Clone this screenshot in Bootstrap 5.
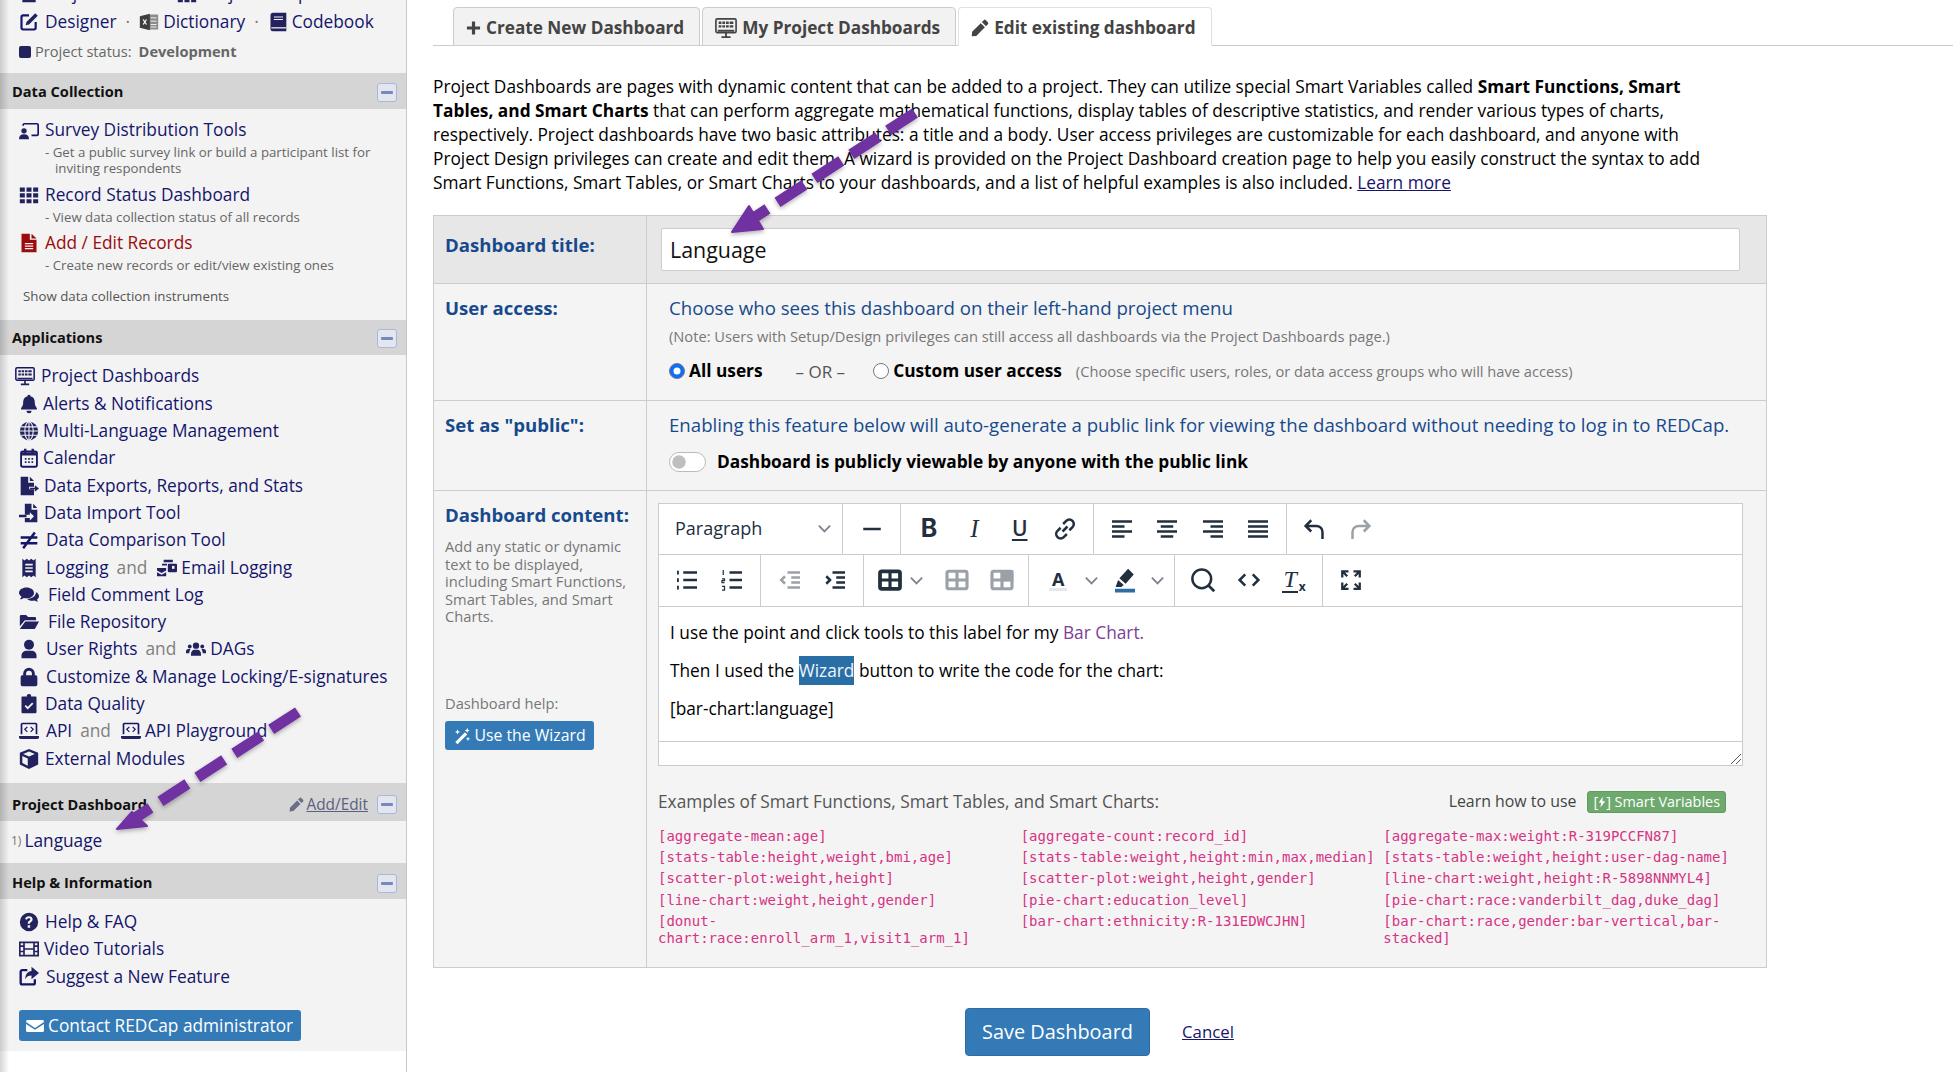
<!DOCTYPE html>
<html lang="en">
<head>
    <meta charset="UTF-8">
    <meta name="viewport" content="width=device-width, initial-scale=1.0">
    <title>Edit Project Dashboard</title>
    <link href="https://cdn.jsdelivr.net/npm/bootstrap@5.3.3/dist/css/bootstrap.min.css" rel="stylesheet">
    <style>
        html, body { height: 1072px; overflow: hidden; }
        body { font-family: "Open Sans", "Liberation Sans", sans-serif; font-size: 17.3px; color: #000; background: #fff; }
        a { text-decoration: none; }
        .page-frame { height: 1072px; position: relative; overflow: hidden; }

        /* left menu */
        .side-menu { width: 407px; flex: none; border-right: 1px solid #c8c8c8; position: relative; border-bottom-left-radius: 16px; }
        .side-menu::after { content: ""; position: absolute; top: 0; bottom: 0; left: 0; width: 9px; background: linear-gradient(to right, rgba(0,0,0,.16), rgba(0,0,0,0)); pointer-events: none; }
        .side-fill { background: #f3f3f3; height: 1051px; }
        .side-head { background: #d5d5d5; height: 36px; padding: 2px 9px 0 12px; font-weight: 700; font-size: 14.6px; color: #111; }
        .side-head.tall { height: 38px; padding-top: 5px; }
        .side-head.thin { height: 35px; }
        .side-head.low { padding-top: 4px; }
        .side-toggle { width: 20px; height: 19px; border: 1.5px solid #a9b7e0; border-radius: 3px; background: #e4e6ef; margin-left: 9px; }
        .side-toggle::before { content: ""; display: block; width: 12px; height: 2.5px; background: #7688c0; border-radius: 1px; }
        .menu-link { color: #15156b; }
        .menu-red { color: #9b0c0c; }
        .menu-row { height: 27.3px; padding-left: 15px; white-space: nowrap; }
        .menu-row.short { height: 26px; }
        .menu-and { color: #808080; margin: 0 10px 0 8px; }
        .icon-slot { flex: none; display: flex; align-items: center; padding-left: 4px; }
        .sl-26 { width: 26px; padding-left: 0; }
        .sl-28 { width: 28px; }
        .sl-29 { width: 29px; }
        .sl-30 { width: 30px; }
        .sl-31 { width: 31px; }
        .sl-33 { width: 33px; }
        .menu-ic { width: 20px; height: 20px; fill: #22225f; flex: none; }
        .menu-red-ic { fill: #9b0c0c; }
        .pencil-ic { width: 15px; height: 15px; fill: #6a6f88; margin-right: 2px; }
        .mail-ic { fill: #fff; width: 18px; height: 18px; }
        .menu-desc { font-size: 13.25px; line-height: 16px; color: #666; padding-left: 55px; text-indent: -10px; padding-right: 20px; margin-top: 1px; }
        .top-sliver { height: 8px; overflow: hidden; }
        .sliver-row { margin-top: -19.300px; }
        .status-row { font-size: 14.6px; color: #666; height: 26px; padding-left: 19px; }
        .status-dot { width: 12px; height: 12px; background: #22225f; border-radius: 2px; margin-right: 4px; }
        .status-val { font-weight: 700; margin-left: 7px; }
        .mid-dot { color: #777; margin: 0 9px; }
        .row-gap-6 { margin-top: 6px; }
        .row-gap-5 { margin-top: 5px; }
        .show-instr { font-size: 13.3px; line-height: 16px; color: #555; padding: 15px 0 15.500px 23px; }
        .add-edit { font-size: 15.4px; color: #5a6080; font-weight: 400; text-decoration: underline; }
        .row-num { font-size: 12px; color: #777; margin-right: 3px; }
        .app-list { padding: 8px 0 11px; }
        .lang-row { height: 42px; padding: 0 0 2px 11px; }
        .help-list { padding: 9px 0 20px; }
        .contact-btn { background: #337ab7; color: #fff; font-size: 17.3px; height: 31px; width: 282px; margin-left: 19px; border-radius: 3px; padding: 0 0 0 7px; white-space: nowrap; border: 0; }

        /* right side */
        .main-area { flex: 1; min-width: 0; padding: 7px 0 0 26px; }
        .tabs-line { border-bottom-color: #ccc; padding-left: 20px; gap: 2px; height: 39px; flex-wrap: nowrap; }
        .tabs-line .nav-link { font-weight: 700; color: #444; background: #f2f2f2; border: 1px solid #ccc; border-radius: 4px 4px 0 0; padding: 2px 15px 0 12px; height: 39px; display: flex; align-items: center; font-size: 17.2px; gap: 5px; white-space: nowrap; }
        .tabs-line .nav-link.active { background: #fff; border-bottom-color: #fff; color: #444; }
        .tab-ic { width: 22px; height: 22px; fill: #444; }
        .tab-plus { width: 15px; height: 20px; }
        .tab-pen { width: 18px; height: 20px; }
        .intro-text { width: 1285px; line-height: 24px; margin: 29px 0 0; font-size: 17.3px; }
        .intro-text a { color: #15156b; text-decoration: underline; }
        .form-box { width: 1334px; margin-top: 19.500px; border: 1px solid #ccc; background: #f4f4f4; }
        .box-row { border-bottom: 1px solid #ccc; }
        .box-row:last-child { border-bottom: 0; }
        .box-label { width: 213px; flex: none; border-right: 1px solid #ccc; padding: 12px 11px 0; }
        .box-label.mid { padding: 0 11px 8px; }
        .label-text { color: #174a8c; font-weight: 700; font-size: 18.6px; line-height: 24px; display: block; }
        .row-title { height: 68px; background: #e7e7e7; }
        .title-input { margin: 12px 0 0 14px; width: 1079px; height: 43px; font-size: 21.4px; border-color: #ccc; border-radius: 2px; padding: 0 8px; color: #111; font-family: inherit; }
        .row-access { height: 117px; }
        .row-public { height: 90px; }
        .row-content { height: 476px; }
        .content-pad { padding: 12px 0 0 22px; }
        .blue-line { color: #174a8c; font-size: 18.65px; line-height: 24px; white-space: nowrap; }
        .note-line { color: #777; font-size: 14.66px; line-height: 20px; }
        .note-gap { margin-top: 6px; }
        .line-gap { margin-top: 13px; }
        .bold-opt { font-weight: 700; font-size: 17.3px; line-height: 24px; }
        .radio-line .form-check-input { width: 16px; height: 16px; margin: 0 4px 0 0; border-color: #777; }
        .or-text { color: #555; margin: 0 28px 0 33px; font-size: 17px; }
        .choose-note { margin-left: 14px; }
        .switch-line { padding: 0; margin-bottom: 0; }
        .switch-line .form-check-input { width: 37px; height: 20px; margin: 0 11px 0 0; float: none; background-color: #fff; border-color: #bbb; }
        .help-gray { color: #777; font-size: 14.7px; line-height: 17.5px; }
        .help-desc { margin-top: 11.500px; }
        .help-label { margin-top: 69px; margin-bottom: 9px; }
        .wizard-btn { background: #337ab7; color: #fff; font-size: 15.8px; height: 29px; width: 149px; padding: 0; border-radius: 3px; border: 0; gap: 3px; }

        /* editor */
        .editor-box { width: 1085px; height: 263px; margin: 12px 0 0 11px; border: 1px solid #ccc; background: #fff; position: relative; }
        .tool-row { height: 51.5px; border-bottom: 1px solid #ccc; color: #222f3e; }
        .tool-group { height: 100%; border-right: 1px solid #ccc; flex: none; }
        .tool-group:last-child { border-right: 0; }
        .gw-58 { width: 57.6px; }
        .gw-102 { width: 102.4px; }
        .gw-103 { width: 103px; }
        .gw-146 { width: 146px; }
        .gw-148 { width: 147.6px; }
        .gw-165 { width: 165px; }
        .gw-193 { width: 193px; }
        .tool-tail { padding-left: 5px; }
        .tool-btn { width: 45.4px; height: 100%; flex: none; }
        .tool-chev { width: 21px; height: 100%; flex: none; }
        .tool-chev svg { width: 15px; height: 15px; flex: none; fill: none; stroke: #7d8590; stroke-width: 2; }
        .chev-tight svg { margin-right: 14px; }
        .tool-btn svg { width: 30px; height: 30px; fill: #222f3e; }
        .tool-off svg { fill: #9aa1a9; }
        .tool-stroke svg { fill: none; stroke: #222f3e; stroke-width: 2; }
        .tool-stroke.tool-off svg { stroke: #9aa1a9; }
        .glyph-b { font-weight: 700; font-size: 25px; line-height: 1; font-family: "Inter", "Open Sans", sans-serif; }
        .glyph-i { font-style: italic; font-size: 25px; line-height: 1; font-family: "Liberation Serif", serif; }
        .glyph-u { font-size: 21px; font-weight: 600; line-height: 1; text-decoration: underline; text-underline-offset: 3px; }
        .glyph-a { font-size: 18px; font-weight: 700; line-height: 1; border-bottom: 3px solid #e4e8e8; padding: 0 3px; }
        .glyph-t { font-style: italic; font-size: 24px; line-height: 1; font-family: "Liberation Serif", serif; border-bottom: 2.500px solid #222f3e; padding: 0 1px; }
        .glyph-x { font-size: 12px; font-weight: 700; line-height: 1; margin-left: 1px; }
        .para-pick { width: 184.4px; padding: 0 10px 0 16px; font-size: 18px; }
        .para-pick svg { width: 15px; height: 15px; fill: none; stroke: #7d8590; stroke-width: 2; }
        .edit-body { height: 135px; padding: 7px 11px; font-size: 17.3px; border-bottom: 1px solid #ccc; }
        .edit-body p { margin: 0; line-height: 38px; }
        .purple-word { color: #7b3f98; }
        .mark-word { background: #2a6ea6; color: #f2f6fa; padding: 3px 0; }
        .grip-svg { position: absolute; right: 0; bottom: 0; width: 12px; height: 12px; stroke: #555; fill: none; }

        .examples-head { width: 1086px; margin: 25px 0 0 11px; height: 22px; font-size: 17.3px; color: #555; }
        .learn-text { font-size: 15.9px; color: #444; margin-right: 11px; }
        .smart-badge { background: #6eaa6e; border: 1px solid #5d9c5d; color: #fff; font-size: 14.4px; height: 22px; padding: 0 5px; border-radius: 3px; margin-right: 18px; white-space: nowrap; }
        .example-cols { width: 1088px; margin: 15px 0 0 11px; }
        .example-item { font-family: "DejaVu Sans Mono", "Liberation Mono", monospace; font-size: 14px; line-height: 16.5px; color: #d63384; margin-bottom: 4.9px; padding-right: 6px; }
        .save-btn { background: #337ab7; color: #fff; font-size: 19.9px; height: 48px; width: 185px; padding: 0; border-radius: 4px; border: 1px solid #2e6da4; }
        .save-row { width: 1334px; margin-top: 40px; padding-left: 532px; }
        .cancel-link { color: #15156b; text-decoration: underline; margin-left: 32px; font-size: 16.8px; }

        .note-arrows { position: absolute; left: 0; top: 0; width: 1953px; height: 1072px; pointer-events: none; z-index: 5; }
    </style>
</head>
<body>
    <svg width="0" height="0" class="position-absolute">
        <defs>
            <symbol id="i-edit" viewBox="0 0 24 24"><path d="M12 4H5a2 2 0 0 0-2 2v13a2 2 0 0 0 2 2h13a2 2 0 0 0 2-2v-7" fill="none" stroke="currentColor" stroke-width="2.6"/><path d="M19.5 1.5l3 3-10.500 10.500-4 1 1-4z"/></symbol>
            <symbol id="i-excel" viewBox="0 0 24 24"><rect x="11" y="3" width="12" height="18" fill="#8b8b8b"/><path d="M14 7h7M14 11h7M14 15h7M14 18h7" stroke="#eee" stroke-width="1.200"/><path d="M1 5l12-3v20L1 19z" fill="#3f3f3f"/><path d="M5 9l4 6M9 9l-4 6" stroke="#fff" stroke-width="1.500"/></symbol>
            <symbol id="i-book" viewBox="0 0 24 24"><path d="M6 1h16v22H6a3 3 0 0 1-3-3V4a3 3 0 0 1 3-3z"/><path d="M7 6h11M7 9h11" stroke="#f3f3f3" stroke-width="1.400"/><path d="M4 19h18" stroke="#f3f3f3" stroke-width="1.500"/></symbol>
            <symbol id="i-home" viewBox="0 0 24 24"><path d="M12 2L1 12h3v10h16V12h3z"/></symbol>
            <symbol id="i-chalk" viewBox="0 0 24 24"><circle cx="6" cy="13" r="3.200"/><path d="M0 23c0-4 2-6 6-6s6 2 6 6z"/><path d="M5 7V6a1.500 1.500 0 0 1 1.500-1.500h15A1.500 1.500 0 0 1 23 6v11a1.500 1.500 0 0 1-1.500 1.500H15" fill="none" stroke="currentColor" stroke-width="2"/></symbol>
            <symbol id="i-grid" viewBox="0 0 24 24"><path d="M1 3h6v5H1zM9 3h6v5H9zM17 3h6v5h-6zM1 10h6v5H1zM9 10h6v5H9zM17 10h6v5h-6zM1 17h6v5H1zM9 17h6v5H9zM17 17h6v5h-6z"/></symbol>
            <symbol id="i-file" viewBox="0 0 24 24"><path fill-rule="evenodd" d="M3 1h10v7h8v15H3zM7 12v1.500h10V12zM7 15v1.500h10V15zM7 18v1.500h10V18z"/><path d="M15 1l6 5.500h-6z"/></symbol>
            <symbol id="i-monitor" viewBox="0 0 24 24"><rect x="1" y="2" width="22" height="15" rx="1.500" fill="none" stroke="currentColor" stroke-width="1.800"/><path d="M4 5h3v2.500H4zM8 5h3v2.500H8zM12 5h3v2.500h-3zM16 5h4v2.500h-4zM4 9h3v2.500H4zM8 9h3v2.500H8zM12 9h3v2.500h-3zM16 9h4v2.500h-4zM3 14h18v2H3z"/><path d="M11 17h2v4h-2zM7 21h10v2H7z"/></symbol>
            <symbol id="i-bell" viewBox="0 0 24 24"><path d="M12 1a2 2 0 0 1 2 2c4 .8 5 4 5 7.500 0 4.500 2.500 5.500 2.500 7v1h-19v-1c0-1.500 2.500-2.500 2.500-7C5 7 6 3.800 10 3a2 2 0 0 1 2-2zM9 20h6a3 3 0 0 1-6 0z"/></symbol>
            <symbol id="i-globe" viewBox="0 0 24 24"><circle cx="12" cy="12" r="11"/><path d="M12 1v22M1 12h22M2.500 7h19M2.500 17h19" stroke="#f3f3f3" stroke-width="1.300" fill="none"/><ellipse cx="12" cy="12" rx="5" ry="11" fill="none" stroke="#f3f3f3" stroke-width="1.300"/></symbol>
            <symbol id="i-cal" viewBox="0 0 24 24"><rect x="2.500" y="4" width="19" height="18.500" rx="2" fill="none" stroke="currentColor" stroke-width="2.200"/><path d="M6 1h3v5H6zM15 1h3v5h-3zM3 5h18v4H3zM7 12h2v2H7zM11 12h2v2h-2zM15 12h2v2h-2zM7 16h2v2H7zM11 16h2v2h-2zM15 16h2v2h-2z"/></symbol>
            <symbol id="i-export" viewBox="0 0 24 24"><path d="M2 1h9v7h7v5h-6v3h6v7H2z"/><path d="M13 1l5 5h-5zM13 14h6v-3l5 4-5 4v-3h-6z"/></symbol>
            <symbol id="i-import" viewBox="0 0 24 24"><path d="M7 1h8v7h7v15H7v-5h6v3l5-5-5-5v3H7z"/><path d="M17 1l5 5h-5zM0 14h9v3H0z"/></symbol>
            <symbol id="i-neq" viewBox="0 0 24 24"><path d="M2 9h20M2 16h20M19 3L5 22" fill="none" stroke="currentColor" stroke-width="3"/></symbol>
            <symbol id="i-receipt" viewBox="0 0 24 24"><path fill-rule="evenodd" d="M4 1l2.700 2L9.300 1 12 3l2.700-2 2.600 2L20 1v22l-2.700-2-2.600 2L12 21l-2.700 2-2.600-2L4 23zM7.500 7v2h9V7zM7.500 11v2h9v-2zM7.500 15v2h9v-2z"/></symbol>
            <symbol id="i-mail" viewBox="0 0 24 24"><path d="M8 2h11v3H8zM6 7h6v2H6zM14 7h9a1 1 0 0 1 1 1v8a1 1 0 0 1-1 1h-9a1 1 0 0 1-1-1V8a1 1 0 0 1 1-1z"/><path d="M0 12h11v3l-5.500 3L0 15zM0 17l5.500 3 5.500-3v5H0z"/><rect x="18" y="9.500" width="3" height="3.500" fill="#f3f3f3"/></symbol>
            <symbol id="i-comments" viewBox="0 0 24 24"><path d="M9 3c5 0 9 2.800 9 6.500S14 16 9 16c-1.200 0-2.300-.2-3.300-.5C4.500 16.600 3 17 1 17c1-1 1.800-2.300 2-3.300C1.200 12.500 0 11 0 9.500 0 5.800 4 3 9 3z"/><path d="M20 8.500c2.400 1 4 3 4 5 0 1.600-1 3-2.500 4 .2.900.9 2 1.500 2.500-1.700 0-3-.4-4.100-1.400-.9.300-1.900.4-2.900.4-2.700 0-5-1-6.300-2.600 5.700 0 10.800-3 10.800-8.400z"/></symbol>
            <symbol id="i-folder" viewBox="0 0 24 24"><path d="M1 5a1.500 1.500 0 0 1 1.500-1.500h6l2.500 2.500h8a1.500 1.500 0 0 1 1.500 1.500V10H7l-6 7z"/><path d="M7.500 11.500H24l-5 9H1z"/></symbol>
            <symbol id="i-user" viewBox="0 0 24 24"><circle cx="12" cy="7" r="6"/><path d="M3 23v-3c0-4 3-6 6-6h6c3 0 6 2 6 6v3z"/></symbol>
            <symbol id="i-users" viewBox="0 0 24 24"><circle cx="12" cy="8" r="3.800"/><circle cx="4.500" cy="9" r="2.300"/><circle cx="19.500" cy="9" r="2.300"/><path d="M6 20v-2c0-3 2-5 4-5h4c2 0 4 2 4 5v2zM0 17v-2c0-1.500 1-3 3-3h2.500C4.500 13.500 4 15 4 17zM24 17v-2c0-1.500-1-3-3-3h-2.500c1 1.500 1.500 3 1.500 5z"/></symbol>
            <symbol id="i-lock" viewBox="0 0 24 24"><path fill-rule="evenodd" d="M12 1a7 7 0 0 1 7 7v2h1a2 2 0 0 1 2 2v9a2 2 0 0 1-2 2H4a2 2 0 0 1-2-2v-9a2 2 0 0 1 2-2h1V8a7 7 0 0 1 7-7zm0 3.500A3.500 3.500 0 0 0 8.500 8v2h7V8A3.500 3.500 0 0 0 12 4.500z"/></symbol>
            <symbol id="i-clip" viewBox="0 0 24 24"><path d="M12 0a2.500 2.500 0 0 1 2.500 3H20a1 1 0 0 1 1 1v18a1 1 0 0 1-1 1H4a1 1 0 0 1-1-1V4a1 1 0 0 1 1-1h5.500A2.500 2.500 0 0 1 12 0z"/><path d="M7.500 14l3 3 6-6" fill="none" stroke="#f3f3f3" stroke-width="2.200"/></symbol>
            <symbol id="i-laptop" viewBox="0 0 24 24"><path d="M4 3h16a1 1 0 0 1 1 1v12M4 3a1 1 0 0 0-1 1v12" fill="none" stroke="currentColor" stroke-width="2"/><path d="M0 18h24v1.500a2 2 0 0 1-2 2H2a2 2 0 0 1-2-2z"/><path d="M10 7l-3 3 3 3M14 7l3 3-3 3" fill="none" stroke="currentColor" stroke-width="1.500"/></symbol>
            <symbol id="i-cube" viewBox="0 0 24 24"><path fill-rule="evenodd" d="M12 0l11 4.500v14L12 24 1 18.500v-14zM12 3L5 6l7 3 7-3zM4 8.500v8.200l6.500 3.300v-8.700z"/></symbol>
            <symbol id="i-pencil" viewBox="0 0 24 24"><path d="M17 1.500a2 2 0 0 1 2.800 0l2.700 2.700a2 2 0 0 1 0 2.800L20 9.500 14.500 4zM13 5.500L18.500 11 7 22.500 1 23l.5-6z"/></symbol>
            <symbol id="i-help" viewBox="0 0 24 24"><path fill-rule="evenodd" d="M12 1a11 11 0 1 1 0 22 11 11 0 0 1 0-22zm-.1 4c-2.500 0-4.200 1.200-4.700 3.500l2.400.7c.3-1.200 1-1.800 2.200-1.800 1.100 0 1.800.6 1.800 1.400 0 .8-.6 1.200-1.500 1.800-1 .7-1.600 1.500-1.600 3v.6h2.600v-.4c0-.8.400-1.200 1.300-1.800 1.100-.7 1.900-1.600 1.900-3.300C16.300 6.400 14.500 5 11.900 5zm-1.500 11v3h3v-3z"/></symbol>
            <symbol id="i-film" viewBox="0 0 24 24"><path fill-rule="evenodd" d="M0 3h24v18H0zm2 2v2.500h3V5zm0 4.500V14h3V9.500zm0 6.500v3h3v-3zm5-11v6h10V5zm0 8v6h10v-6zm12-8v2.500h3V5zm0 4.500V14h3V9.500zm0 6.500v3h3v-3z"/></symbol>
            <symbol id="i-share" viewBox="0 0 24 24"><path d="M10 5H4a2 2 0 0 0-2 2v13a2 2 0 0 0 2 2h13a2 2 0 0 0 2-2v-4" fill="none" stroke="currentColor" stroke-width="2.800"/><path d="M15 1l9 7.500-9 7.500v-4.500c-3.500 0-6 1-7.500 4.500 0-6 3-9.500 7.500-10z"/></symbol>
            <symbol id="i-mailw" viewBox="0 0 24 24"><path d="M2 4h20a2 2 0 0 1 2 2v.8l-12 7.700L0 6.800V6a2 2 0 0 1 2-2zM0 9.300l12 7.700 12-7.700V18a2 2 0 0 1-2 2H2a2 2 0 0 1-2-2z"/></symbol>
            <symbol id="i-plus" viewBox="0 0 16 20"><path d="M6.300 3h3.400v5.300H15v3.400H9.700V17H6.300v-5.300H1V8.300h5.300z"/></symbol>
            <symbol id="i-wand" viewBox="0 0 24 24"><path d="M16 7l3 3L6 23l-3-3zM6 3l1 2.500L9.500 6.500 7 7.500 6 10 5 7.500 2.500 6.500 5 5.500zM19 1l1 2.500L22.500 4.500 20 5.500 19 8l-1-2.500-2.500-1 2.500-1zM20 13l.8 2 2.200.8-2.200.8-.8 2.400-.8-2.400-2.200-.8 2.200-.8z"/></symbol>
            <symbol id="i-chev" viewBox="0 0 16 16"><path d="M2 5l6 6 6-6"/></symbol>
        </defs>
    </svg>

    <div class="d-flex page-frame">
        <aside class="side-menu">
            <div class="side-fill">
                <div class="top-sliver">
                    <div class="d-flex align-items-center menu-row sliver-row">
                        <a class="menu-link d-flex align-items-center" href="#"><span class="icon-slot sl-30"><svg class="menu-ic"><use href="#i-home"/></svg></span>Project Home</a>
                        <span class="mid-dot">·</span>
                        <a class="menu-link d-flex align-items-center" href="#"><svg class="menu-ic me-1"><use href="#i-grid"/></svg>Project Setup</a>
                    </div>
                </div>
                <div class="d-flex align-items-center menu-row">
                    <a class="menu-link d-flex align-items-center" href="#"><span class="icon-slot sl-30"><svg class="menu-ic"><use href="#i-edit"/></svg></span>Designer</a>
                    <span class="mid-dot">·</span>
                    <a class="menu-link d-flex align-items-center" href="#"><svg class="menu-ic me-1"><use href="#i-excel"/></svg>Dictionary</a>
                    <span class="mid-dot">·</span>
                    <a class="menu-link d-flex align-items-center" href="#"><svg class="menu-ic me-1"><use href="#i-book"/></svg>Codebook</a>
                </div>
                <div class="d-flex align-items-center status-row mt-1"><span class="status-dot"></span>Project status:<span class="status-val">Development</span></div>

                <div class="side-head d-flex align-items-center justify-content-between mt-2"><span>Data Collection</span><span class="side-toggle d-flex align-items-center justify-content-center"></span></div>
                <div class="pt-2">
                    <a class="menu-link menu-row short d-flex align-items-center" href="#"><span class="icon-slot sl-30"><svg class="menu-ic"><use href="#i-chalk"/></svg></span>Survey Distribution Tools</a>
                    <div class="menu-desc">- Get a public survey link or build a participant list for inviting respondents</div>
                    <a class="menu-link menu-row short d-flex align-items-center row-gap-6" href="#"><span class="icon-slot sl-30"><svg class="menu-ic"><use href="#i-grid"/></svg></span>Record Status Dashboard</a>
                    <div class="menu-desc">- View data collection status of all records</div>
                    <a class="menu-red menu-row short d-flex align-items-center row-gap-5" href="#"><span class="icon-slot sl-30"><svg class="menu-ic menu-red-ic"><use href="#i-file"/></svg></span>Add / Edit Records</a>
                    <div class="menu-desc">- Create new records or edit/view existing ones</div>
                    <div class="show-instr">Show data collection instruments</div>
                </div>

                <div class="side-head thin d-flex align-items-center justify-content-between"><span>Applications</span><span class="side-toggle d-flex align-items-center justify-content-center"></span></div>
                <div class="app-list">
                    <a class="menu-link menu-row d-flex align-items-center" href="#"><span class="icon-slot sl-26"><svg class="menu-ic"><use href="#i-monitor"/></svg></span>Project Dashboards</a>
                    <a class="menu-link menu-row d-flex align-items-center" href="#"><span class="icon-slot sl-28"><svg class="menu-ic"><use href="#i-bell"/></svg></span>Alerts &amp; Notifications</a>
                    <a class="menu-link menu-row d-flex align-items-center" href="#"><span class="icon-slot sl-28"><svg class="menu-ic"><use href="#i-globe"/></svg></span>Multi-Language Management</a>
                    <a class="menu-link menu-row d-flex align-items-center" href="#"><span class="icon-slot sl-28"><svg class="menu-ic"><use href="#i-cal"/></svg></span>Calendar</a>
                    <a class="menu-link menu-row d-flex align-items-center" href="#"><span class="icon-slot sl-29"><svg class="menu-ic"><use href="#i-export"/></svg></span>Data Exports, Reports, and Stats</a>
                    <a class="menu-link menu-row d-flex align-items-center" href="#"><span class="icon-slot sl-29"><svg class="menu-ic"><use href="#i-import"/></svg></span>Data Import Tool</a>
                    <a class="menu-link menu-row d-flex align-items-center" href="#"><span class="icon-slot sl-31"><svg class="menu-ic"><use href="#i-neq"/></svg></span>Data Comparison Tool</a>
                    <div class="menu-row d-flex align-items-center"><a class="menu-link d-flex align-items-center" href="#"><span class="icon-slot sl-31"><svg class="menu-ic"><use href="#i-receipt"/></svg></span>Logging</a><span class="menu-and">and</span><a class="menu-link d-flex align-items-center" href="#"><svg class="menu-ic me-1"><use href="#i-mail"/></svg>Email Logging</a></div>
                    <a class="menu-link menu-row d-flex align-items-center" href="#"><span class="icon-slot sl-33"><svg class="menu-ic"><use href="#i-comments"/></svg></span>Field Comment Log</a>
                    <a class="menu-link menu-row d-flex align-items-center" href="#"><span class="icon-slot sl-33"><svg class="menu-ic"><use href="#i-folder"/></svg></span>File Repository</a>
                    <div class="menu-row d-flex align-items-center"><a class="menu-link d-flex align-items-center" href="#"><span class="icon-slot sl-31"><svg class="menu-ic"><use href="#i-user"/></svg></span>User Rights</a><span class="menu-and">and</span><a class="menu-link d-flex align-items-center" href="#"><svg class="menu-ic me-1"><use href="#i-users"/></svg>DAGs</a></div>
                    <a class="menu-link menu-row d-flex align-items-center" href="#"><span class="icon-slot sl-31"><svg class="menu-ic"><use href="#i-lock"/></svg></span>Customize &amp; Manage Locking/E-signatures</a>
                    <a class="menu-link menu-row d-flex align-items-center" href="#"><span class="icon-slot sl-30"><svg class="menu-ic"><use href="#i-clip"/></svg></span>Data Quality</a>
                    <div class="menu-row d-flex align-items-center"><a class="menu-link d-flex align-items-center" href="#"><span class="icon-slot sl-31"><svg class="menu-ic"><use href="#i-laptop"/></svg></span>API</a><span class="menu-and">and</span><a class="menu-link d-flex align-items-center" href="#"><svg class="menu-ic me-1"><use href="#i-laptop"/></svg>API Playground</a></div>
                    <a class="menu-link menu-row d-flex align-items-center" href="#"><span class="icon-slot sl-30"><svg class="menu-ic"><use href="#i-cube"/></svg></span>External Modules</a>
                </div>

                <div class="side-head tall d-flex align-items-center justify-content-between"><span>Project Dashboard</span><span class="d-flex align-items-center"><svg class="menu-ic pencil-ic"><use href="#i-pencil"/></svg><a class="add-edit" href="#">Add/Edit</a><span class="side-toggle d-flex align-items-center justify-content-center"></span></span></div>
                <div class="d-flex align-items-center lang-row"><span class="row-num">1)</span><a class="menu-link" href="#">Language</a></div>

                <div class="side-head low d-flex align-items-center justify-content-between"><span>Help &amp; Information</span><span class="side-toggle d-flex align-items-center justify-content-center"></span></div>
                <div class="help-list">
                    <a class="menu-link menu-row d-flex align-items-center" href="#"><span class="icon-slot sl-30"><svg class="menu-ic"><use href="#i-help"/></svg></span>Help &amp; FAQ</a>
                    <a class="menu-link menu-row d-flex align-items-center" href="#"><span class="icon-slot sl-29"><svg class="menu-ic"><use href="#i-film"/></svg></span>Video Tutorials</a>
                    <a class="menu-link menu-row d-flex align-items-center" href="#"><span class="icon-slot sl-31"><svg class="menu-ic"><use href="#i-share"/></svg></span>Suggest a New Feature</a>
                </div>
                <button class="btn contact-btn d-flex align-items-center gap-1" type="button"><svg class="menu-ic mail-ic"><use href="#i-mailw"/></svg>Contact REDCap administrator</button>
            </div>
        </aside>

        <main class="main-area">
            <ul class="nav nav-tabs tabs-line">
                <li class="nav-item"><a class="nav-link" href="#"><svg class="tab-ic tab-plus"><use href="#i-plus"/></svg>Create New Dashboard</a></li>
                <li class="nav-item"><a class="nav-link" href="#"><svg class="tab-ic"><use href="#i-monitor"/></svg>My Project Dashboards</a></li>
                <li class="nav-item"><a class="nav-link active" href="#"><svg class="tab-ic tab-pen"><use href="#i-pencil"/></svg>Edit existing dashboard</a></li>
            </ul>

            <p class="intro-text">Project Dashboards are pages with dynamic content that can be added to a project. They can utilize special Smart Variables called <b>Smart Functions, Smart Tables, and Smart Charts</b> that can perform aggregate mathematical functions, display tables of descriptive statistics, and render various types of charts, respectively. Project dashboards have two basic attributes: a title and a body. User access privileges are customizable for each dashboard, and anyone with Project Design privileges can create and edit them. A wizard is provided on the Project Dashboard creation page to help you easily construct the syntax to add Smart Functions, Smart Tables, or Smart Charts to your dashboards, and a list of helpful examples is also included. <a href="#">Learn more</a></p>

            <div class="form-box">
                <div class="box-row row-title d-flex">
                    <div class="box-label mid d-flex align-items-center"><span class="label-text">Dashboard title:</span></div>
                    <div><input class="form-control title-input" type="text" value="Language"></div>
                </div>

                <div class="box-row row-access d-flex">
                    <div class="box-label"><span class="label-text">User access:</span></div>
                    <div class="content-pad">
                        <div class="blue-line">Choose who sees this dashboard on their left-hand project menu</div>
                        <div class="note-line note-gap">(Note: Users with Setup/Design privileges can still access all dashboards via the Project Dashboards page.)</div>
                        <div class="d-flex align-items-center radio-line line-gap">
                            <input class="form-check-input" type="radio" name="access" checked>
                            <span class="bold-opt">All users</span>
                            <span class="or-text">– OR –</span>
                            <input class="form-check-input" type="radio" name="access">
                            <span class="bold-opt">Custom user access</span>
                            <span class="note-line choose-note">(Choose specific users, roles, or data access groups who will have access)</span>
                        </div>
                    </div>
                </div>

                <div class="box-row row-public d-flex">
                    <div class="box-label"><span class="label-text">Set as "public":</span></div>
                    <div class="content-pad">
                        <div class="blue-line">Enabling this feature below will auto-generate a public link for viewing the dashboard without needing to log in to REDCap.</div>
                        <div class="form-check form-switch d-flex align-items-center switch-line line-gap">
                            <input class="form-check-input" type="checkbox" role="switch">
                            <span class="bold-opt">Dashboard is publicly viewable by anyone with the public link</span>
                        </div>
                    </div>
                </div>

                <div class="box-row row-content d-flex">
                    <div class="box-label">
                        <span class="label-text">Dashboard content:</span>
                        <div class="help-gray help-desc">Add any static or dynamic text to be displayed, including Smart Functions, Smart Tables, and Smart Charts.</div>
                        <div class="help-gray help-label">Dashboard help:</div>
                        <button class="btn wizard-btn d-flex align-items-center justify-content-center" type="button"><svg class="menu-ic mail-ic"><use href="#i-wand"/></svg>Use the Wizard</button>
                    </div>
                    <div>
                        <div class="editor-box">
                            <div class="tool-row d-flex">
                                <div class="tool-group d-flex align-items-center justify-content-between para-pick">Paragraph<svg><use href="#i-chev"/></svg></div>
                                <div class="tool-group gw-58 d-flex align-items-center justify-content-center">
                                    <span class="tool-btn tool-stroke d-flex align-items-center justify-content-center"><svg viewBox="0 0 24 24"><path d="M5 12h14"/></svg></span>
                                </div>
                                <div class="tool-group gw-193 d-flex align-items-center justify-content-center">
                                    <span class="tool-btn d-flex align-items-center justify-content-center"><span class="glyph-b">B</span></span>
                                    <span class="tool-btn d-flex align-items-center justify-content-center"><span class="glyph-i">I</span></span>
                                    <span class="tool-btn d-flex align-items-center justify-content-center"><span class="glyph-u">U</span></span>
                                    <span class="tool-btn tool-stroke d-flex align-items-center justify-content-center"><svg viewBox="0 0 24 24"><path d="M10 14l4-4M8.500 11l-2.500 2.500a3.500 3.500 0 0 0 5 5l2.500-2.500M15.500 13l2.500-2.500a3.500 3.500 0 0 0-5-5L10.500 8"/></svg></span>
                                </div>
                                <div class="tool-group gw-193 d-flex align-items-center justify-content-center">
                                    <span class="tool-btn tool-stroke d-flex align-items-center justify-content-center"><svg viewBox="0 0 24 24"><path d="M4 6h16M4 10h10M4 14h16M4 18h10"/></svg></span>
                                    <span class="tool-btn tool-stroke d-flex align-items-center justify-content-center"><svg viewBox="0 0 24 24"><path d="M4 6h16M7 10h10M4 14h16M7 18h10"/></svg></span>
                                    <span class="tool-btn tool-stroke d-flex align-items-center justify-content-center"><svg viewBox="0 0 24 24"><path d="M4 6h16M10 10h10M4 14h16M10 18h10"/></svg></span>
                                    <span class="tool-btn tool-stroke d-flex align-items-center justify-content-center"><svg viewBox="0 0 24 24"><path d="M4 6h16M4 10h16M4 14h16M4 18h16"/></svg></span>
                                </div>
                                <div class="tool-group tool-tail d-flex align-items-center">
                                    <span class="tool-btn tool-stroke d-flex align-items-center justify-content-center"><svg viewBox="0 0 24 24"><path d="M9 5L4.500 9.500 9 14M5 9.500h8a5 5 0 0 1 5 5V20"/></svg></span>
                                    <span class="tool-btn tool-stroke tool-off d-flex align-items-center justify-content-center"><svg viewBox="0 0 24 24"><path d="M15 5l4.500 4.500L15 14M19 9.500h-8a5 5 0 0 0-5 5V20"/></svg></span>
                                </div>
                            </div>
                            <div class="tool-row d-flex">
                                <div class="tool-group gw-102 d-flex align-items-center justify-content-center">
                                    <span class="tool-btn tool-stroke d-flex align-items-center justify-content-center"><svg viewBox="0 0 24 24"><path d="M9 6h11M9 12h11M9 18h11"/><path d="M4 6h1.500M4 12h1.500M4 18h1.500" stroke-width="3"/></svg></span>
                                    <span class="tool-btn tool-stroke d-flex align-items-center justify-content-center"><svg viewBox="0 0 24 24"><path d="M10 6h10M10 12h10M10 18h10"/><path d="M5 4v4M4 11h2v1.500H4V14h2M4 17h2v3H4" stroke-width="1"/></svg></span>
                                </div>
                                <div class="tool-group gw-103 d-flex align-items-center justify-content-center">
                                    <span class="tool-btn tool-stroke tool-off d-flex align-items-center justify-content-center"><svg viewBox="0 0 24 24"><path d="M10 6h10M13 10h7M13 14h7M10 18h10M8 9l-3 3 3 3"/></svg></span>
                                    <span class="tool-btn tool-stroke d-flex align-items-center justify-content-center"><svg viewBox="0 0 24 24"><path d="M10 6h10M13 10h7M13 14h7M10 18h10M5 9l3 3-3 3"/></svg></span>
                                </div>
                                <div class="tool-group gw-165 d-flex align-items-center justify-content-center">
                                    <span class="tool-btn tool-stroke d-flex align-items-center justify-content-center"><svg viewBox="0 0 24 24"><rect x="4" y="5" width="16" height="14" rx="1.500" stroke-width="3"/><path d="M12 5v14M4 12h16" stroke-width="2.500"/></svg></span>
                                    <span class="tool-chev chev-tight d-flex align-items-center justify-content-center"><svg><use href="#i-chev"/></svg></span>
                                    <span class="tool-btn tool-stroke tool-off d-flex align-items-center justify-content-center"><svg viewBox="0 0 24 24"><rect x="4" y="5" width="16" height="14" rx="1.500" stroke-width="2.500"/><path d="M12 5v14M4 12h16" stroke-width="2.500"/></svg></span>
                                    <span class="tool-btn tool-stroke tool-off d-flex align-items-center justify-content-center"><svg viewBox="0 0 24 24"><rect x="4" y="5" width="16" height="14" rx="1.500" stroke-width="2.500"/><path d="M12 5v14M4 12h16" stroke-width="2.500"/><path d="M12 5h8v7h-8z" fill="#9aa1a9"/></svg></span>
                                </div>
                                <div class="tool-group gw-146 d-flex align-items-center justify-content-center">
                                    <span class="tool-btn d-flex align-items-center justify-content-center"><span class="glyph-a">A</span></span>
                                    <span class="tool-chev d-flex align-items-center justify-content-center"><svg><use href="#i-chev"/></svg></span>
                                    <span class="tool-btn d-flex align-items-center justify-content-center"><svg viewBox="0 0 24 24"><path d="M14.500 3l4.500 4.500-6.500 7.500-5-4.500zM6.500 12l4.500 4-2 1.500H4.500z"/><rect x="4" y="19" width="16" height="3" fill="#2a6ea6"/></svg></span>
                                    <span class="tool-chev d-flex align-items-center justify-content-center"><svg><use href="#i-chev"/></svg></span>
                                </div>
                                <div class="tool-group gw-148 d-flex align-items-center justify-content-center">
                                    <span class="tool-btn tool-stroke d-flex align-items-center justify-content-center"><svg viewBox="0 0 24 24"><circle cx="11" cy="11" r="7.500" stroke-width="2"/><path d="M16.500 16.500L21 21" stroke-width="2.200"/></svg></span>
                                    <span class="tool-btn tool-stroke d-flex align-items-center justify-content-center"><svg viewBox="0 0 24 24"><path d="M9 7.500L4.500 12 9 16.500M15 7.500l4.500 4.500-4.500 4.500"/></svg></span>
                                    <span class="tool-btn d-flex align-items-center justify-content-center"><span class="d-flex align-items-end"><span class="glyph-t">T</span><span class="glyph-x">x</span></span></span>
                                </div>
                                <div class="tool-group tool-tail d-flex align-items-center">
                                    <span class="tool-btn tool-stroke d-flex align-items-center justify-content-center"><svg viewBox="0 0 24 24"><path d="M10 5H5v5M14 5h5v5M10 19H5v-5M14 19h5v-5M5 5l4 4M19 5l-4 4M5 19l4-4M19 19l-4-4" stroke-width="1.800"/></svg></span>
                                </div>
                            </div>
                            <div class="edit-body">
                                <p>I use the point and click tools to this label for my <span class="purple-word">Bar Chart.</span></p>
                                <p>Then I used the <span class="mark-word">Wizard</span> button to write the code for the chart:</p>
                                <p>[bar-chart:language]</p>
                            </div>
                            <svg class="grip-svg" viewBox="0 0 12 12"><path d="M1 11l10-10M6 11l5-5"/></svg>
                        </div>

                        <div class="examples-head d-flex align-items-center">
                            <span class="me-auto">Examples of Smart Functions, Smart Tables, and Smart Charts:</span>
                            <span class="learn-text">Learn how to use</span>
                            <span class="smart-badge d-flex align-items-center">[<svg viewBox="0 0 10 14" width="8" height="12" fill="#fff"><path d="M6 0L1 8h3l-1 6 6-8H5.500z"/></svg>]&nbsp;Smart Variables</span>
                        </div>
                        <div class="row g-0 example-cols">
                            <div class="col-4">
                                <div class="example-item">[aggregate-mean:age]</div>
                                <div class="example-item">[stats-table:height,weight,bmi,age]</div>
                                <div class="example-item">[scatter-plot:weight,height]</div>
                                <div class="example-item">[line-chart:weight,height,gender]</div>
                                <div class="example-item">[donut-chart:race:enroll_arm_1,visit1_arm_1]</div>
                            </div>
                            <div class="col-4">
                                <div class="example-item">[aggregate-count:record_id]</div>
                                <div class="example-item">[stats-table:weight,height:min,max,median]</div>
                                <div class="example-item">[scatter-plot:weight,height,gender]</div>
                                <div class="example-item">[pie-chart:education_level]</div>
                                <div class="example-item">[bar-chart:ethnicity:R-131EDWCJHN]</div>
                            </div>
                            <div class="col-4">
                                <div class="example-item">[aggregate-max:weight:R-319PCCFN87]</div>
                                <div class="example-item">[stats-table:weight,height:user-dag-name]</div>
                                <div class="example-item">[line-chart:weight,height:R-5898NNMYL4]</div>
                                <div class="example-item">[pie-chart:race:vanderbilt_dag,duke_dag]</div>
                                <div class="example-item">[bar-chart:race,gender:bar-vertical,bar-stacked]</div>
                            </div>
                        </div>
                    </div>
                </div>
            </div>

            <div class="d-flex align-items-center save-row">
                <button class="btn save-btn" type="button">Save Dashboard</button>
                <a class="cancel-link" href="#">Cancel</a>
            </div>
        </main>

        <svg class="note-arrows" viewBox="0 0 1953 1072">
            <defs>
                <filter id="arrow-shadow" x="-10%" y="-10%" width="120%" height="120%"><feDropShadow dx="0" dy="2" stdDeviation="2" flood-color="#000" flood-opacity=".3"/></filter>
            </defs>
            <g filter="url(#arrow-shadow)" fill="#7030a0" stroke="#7030a0">
                <path d="M915 113L752 219" fill="none" stroke-width="11" stroke-dasharray="32 12"/>
                <path d="M732 232L749 206L763 229z" stroke-width="2" stroke-linejoin="round"/>
                <path d="M298 712L135 818" fill="none" stroke-width="11" stroke-dasharray="32 12"/>
                <path d="M117 829L132 812L147 826z" stroke-width="2" stroke-linejoin="round"/>
            </g>
        </svg>
    </div>

    <script src="https://cdn.jsdelivr.net/npm/bootstrap@5.3.3/dist/js/bootstrap.bundle.min.js"></script>
</body>
</html>
